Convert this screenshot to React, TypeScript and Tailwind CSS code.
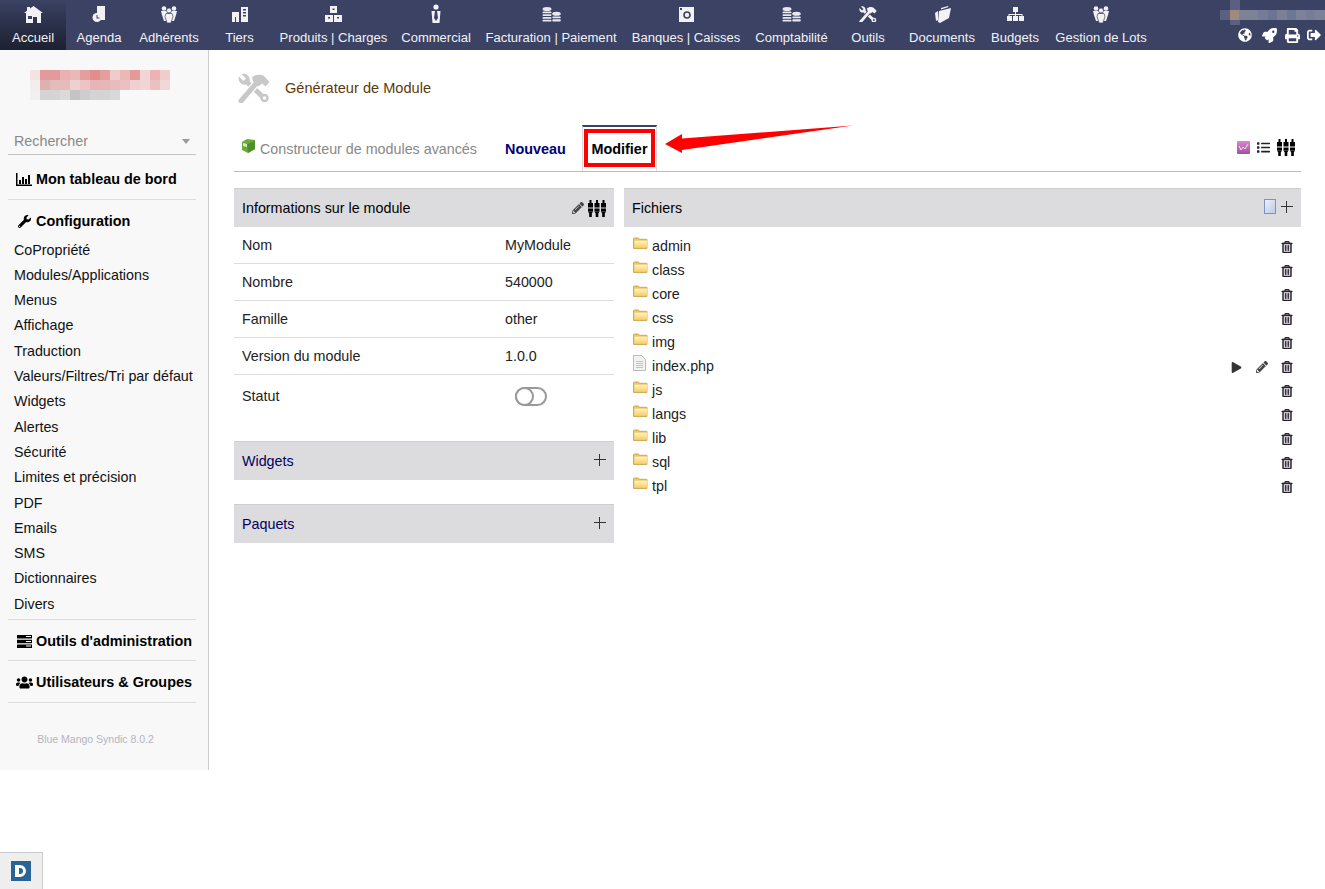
import React from "react";
import { FaGlobeAmericas, FaRocket, FaPrint, FaSignOutAlt, FaWrench, FaUsers, FaPencilAlt, FaPlay, FaRegTrashAlt, FaList } from "react-icons/fa";

const Tools = ({ size, color, bg }: { size: number; color: string; bg: string }) => (
  <svg width={size} height={(size * 30) / 32} viewBox="0 0 32 30">
    <path d="M10 10 L26 25" stroke={color} strokeWidth="5" />
    <circle cx="26.500" cy="25" r="3" fill={bg} stroke={color} strokeWidth="2.500" />
    <path d="M1 3.500 L5.500 8 L8 5.500 L3.500 1 C8 -.5 13 3 11.500 9 L9 11.500 C3 13 -.5 8 1 3.500 Z" fill={color} />
    <path d="M3 28 L19 9.500" stroke={bg} strokeWidth="7.500" />
    <path d="M3 28 L19 9.500" stroke={color} strokeWidth="5" strokeLinecap="round" />
    <path d="M14 4.500 C17 1 23 1 26 3 L31.500 9 L27.500 13.500 L24 10.500 L20.500 13.500 L15 8.500 Z" fill={color} />
  </svg>
);
const Home = () => (
  <svg width="19" height="17" viewBox="0 0 19 17" fill="#f2f2f5">
    <path d="M9.500 0L19 7h-2v10h-4v-6H9v6H2V7H0l3-2.200V1h3v1.600z" />
    <path d="M4 10h4v3H4z" fill="#3b4263" />
  </svg>
);
const SiteMap = () => (
  <svg width="17" height="14" viewBox="0 0 17 14" fill="#f2f2f5">
    <path d="M6 0h5v5H6zM0 9h5v5H0zM6 9h5v5H6zM12 9h5v5h-5z" /><path d="M8 5h1v2h6.500v2h-1V8H9v1H8V8H2.500v1h-1V7H8z" />
  </svg>
);
const Coins = () => (
  <svg width="19" height="15" viewBox="0 0 19 15" fill="#e8e8ee">
    <ellipse cx="5" cy="2" rx="4.500" ry="2" /><rect x=".5" y="4.500" width="9" height="1.800" rx=".9" /><rect x=".5" y="7.200" width="9" height="1.800" rx=".9" /><rect x=".5" y="10" width="9" height="1.800" rx=".9" /><rect x=".5" y="12.800" width="9" height="1.800" rx=".9" />
    <ellipse cx="14.500" cy="6.800" rx="4.300" ry="2" /><rect x="10.300" y="9.400" width="8.500" height="1.800" rx=".9" /><rect x="10.300" y="12.300" width="8.500" height="2.300" rx="1" />
  </svg>
);
const Agenda = () => (
  <svg width="14" height="18" viewBox="0 0 14 18" fill="#f2f2f5">
    <path d="M5 1h8v14H9a5 5 0 0 0-4-6z" /><circle cx="5" cy="12.500" r="4.500" /><path d="M4.500 10h1v2.500h2v1h-3z" fill="#3b4263" />
  </svg>
);
const People = () => (
  <svg width="18" height="17" viewBox="0 0 18 17" fill="#f2f2f5">
    <circle cx="4" cy="2.500" r="2.300" /><path d="M1 5h6l1 3-2 7H4L2 9z" /><circle cx="14" cy="2.500" r="2.300" /><path d="M11 5h6l-1 4-2 6h-2l-2-7z" /><circle cx="9" cy="4.500" r="2.500" stroke="#3b4263" strokeWidth=".7" /><path d="M6 7.500h6l1 3-2 6.500H7l-2-6.500z" stroke="#3b4263" strokeWidth=".7" />
  </svg>
);
const Building = () => (
  <svg width="16" height="16" viewBox="0 0 16 16" fill="#f2f2f5">
    <path d="M9 1h7v15H9zM0 6h7v10H4v-5H3v5H0z" /><path d="M11 3h3v1.500h-3zM11 6h3v1.500h-3zM11 9h3v1.500h-3z" fill="#3b4263" />
  </svg>
);
const Boxes = () => (
  <svg width="17" height="16" viewBox="0 0 17 16" fill="#f2f2f5">
    <path d="M5 0h7v7H5zM0 9h8v7H0zM9 9h8v7H9z" /><path d="M7.500 2.500h2v1.500h-2zM3 11h2v1.500H3zM12 11h2v1.500h-2z" fill="#3b4263" />
  </svg>
);
const Tie = () => (
  <svg width="12" height="20" viewBox="0 0 12 20" fill="#f2f2f5">
    <circle cx="6" cy="3" r="2.600" /><path d="M1.500 7h9l-1 12h-7z" /><path d="M5 7h2l1 7-2 3-2-3z" fill="#3b4263" />
  </svg>
);
const Safe = () => (
  <svg width="15" height="15" viewBox="0 0 15 15">
    <rect width="15" height="15" fill="#f2f2f5" /><circle cx="8" cy="8" r="3" fill="none" stroke="#3b4263" strokeWidth="1.600" /><rect x="1" y="1" width="2" height="2" fill="#3b4263" />
  </svg>
);
const Docs = () => (
  <svg width="17" height="17" viewBox="0 0 17 17" fill="#f2f2f5">
    <path d="M5 5l12-3-2 10-9 5-2-1zM1 7l3-2v9l-2 1z" /><path d="M7 2l7-2 .5 1L7 3.500z" />
  </svg>
);
const Sliders = () => (
  <svg width="18" height="17" viewBox="0 0 18 17" fill="#000">
    {[0, 6.5, 13].map((x) => (
      <g key={x}>
        <rect x={x + 1.500} y="0" width="2" height="4" />
        <rect x={x} y="3" width="5" height="4.500" />
        <rect x={x} y="8.500" width="5" height="3" />
        <path d={`M${x} 11.500h5l-1.200 2v3.500h-2.600v-3.500z`} />
      </g>
    ))}
  </svg>
);
const Plus = () => (
  <svg width="12" height="12" viewBox="0 0 12 12" stroke="#333" strokeWidth="1" className="block"><path d="M5.500 0v12M0 5.500h12" /></svg>
);
const Folder = () => (
  <svg width="15" height="12" viewBox="0 0 16 13">
    <defs><linearGradient id="fo" x1="0" y1="0" x2="0" y2="1"><stop offset="0" stopColor="#fff3c8" /><stop offset="1" stopColor="#f8cf62" /></linearGradient></defs>
    <path d="M.5 2a1 1 0 0 1 1-1h4l1 1.500h8.500v10H.5z" fill="#f0c860" stroke="#c8a656" />
    <rect x="1.500" y="4" width="13.500" height="7.500" fill="url(#fo)" />
  </svg>
);
const FileIco = () => (
  <svg width="13" height="16" viewBox="0 0 13 16">
    <path d="M.500.500h8l4 4v11h-12z" fill="#f2f2f2" stroke="#bbb" />
    <path d="M3 6.500h7M3 8.500h7M3 10.500h7M3 12.500h7" stroke="#c4c4c4" />
  </svg>
);
const Cube = () => (
  <svg width="15" height="15" viewBox="0 0 15 15">
    <path d="M1 3l5-3 8 1v9l-7 4-6-3z" fill="#6aaa3a" /><path d="M6 5l8-3v8l-7 4z" fill="#4f8f2a" /><path d="M2 4l4 1v3l-4-1z" fill="#d8ecc0" />
  </svg>
);
const Stats = () => (
  <svg width="13" height="13" viewBox="0 0 13 13">
    <defs><linearGradient id="st" x1="0" y1="0" x2="0" y2="1"><stop offset="0" stopColor="#d987cf" /><stop offset="1" stopColor="#a64fa0" /></linearGradient></defs>
    <rect width="13" height="13" rx="1" fill="url(#st)" /><path d="M2 5l2 4 2-3 2 2 3-5" fill="none" stroke="#f6e0f4" strokeWidth="1" />
  </svg>
);
const NewFile = () => (
  <svg width="12" height="15" viewBox="0 0 12 15">
    <defs><linearGradient id="nf" x1="0" y1="0" x2="1" y2="1"><stop offset="0" stopColor="#f0f3fa" /><stop offset="1" stopColor="#b9c8e6" /></linearGradient></defs>
    <rect x=".5" y=".5" width="11" height="14" fill="url(#nf)" stroke="#7a94c6" />
  </svg>
);
const Logo = () => (
  <svg width="20" height="20" viewBox="0 0 20 20"><rect width="20" height="20" fill="#2a6496" /><path d="M4 4h5a6 6 0 0 1 6 6 6 6 0 0 1-6 6H8v-3h1a3 3 0 0 0 0-6H8v9H4z" fill="#fff" /></svg>
);
const ChartBar = () => (
  <svg width="16" height="13" viewBox="0 0 16 13" fill="#000">
    <path d="M0 0h1.500v11.500H16V13H0z" /><path d="M3 7h2v4H3zM6 4h2v7H6zM9 6h2v5H9zM12 2h2v9h-2z" />
  </svg>
);
const Server = () => (
  <svg width="15" height="13" viewBox="0 0 15 13" fill="#000">
    <path d="M0 0h15v3.500H0zM0 4.700h15v3.500H0zM0 9.400h15v3.500H0z" /><path d="M9 1h5v1H9zM9 6h5v1H9zM9 10.500h5v1H9z" fill="#fff" />
  </svg>
);

const nav: [string, React.ReactNode, string][] = [
  ["Accueil", <Home />, "w-[66px]"],
  ["Agenda", <Agenda />, "w-[66px]"],
  ["Adhérents", <People />, "w-[74px]"],
  ["Tiers", <Building />, "w-[67px]"],
  ["Produits | Charges", <Boxes />, "w-[121px]"],
  ["Commercial", <Tie />, "w-[84px]"],
  ["Facturation | Paiement", <Coins />, "w-[146px]"],
  ["Banques | Caisses", <Safe />, "w-[124px]"],
  ["Comptabilité", <Coins />, "w-[87px]"],
  ["Outils", <Tools size={18} color="#f2f2f5" bg="#3b4263" />, "w-[66px]"],
  ["Documents", <Docs />, "w-[82px]"],
  ["Budgets", <SiteMap />, "w-[64px]"],
  ["Gestion de Lots", <People />, "w-[108px]"],
];

const sideItems = ["CoPropriété", "Modules/Applications", "Menus", "Affichage", "Traduction", "Valeurs/Filtres/Tri par défaut", "Widgets", "Alertes", "Sécurité", "Limites et précision", "PDF", "Emails", "SMS", "Dictionnaires", "Divers"];
const files = ["admin", "class", "core", "css", "img", "index.php", "js", "langs", "lib", "sql", "tpl"];
const info: [string, string][] = [["Nom", "MyModule"], ["Nombre", "540000"], ["Famille", "other"], ["Version du module", "1.0.0"]];

const logoRows = [
  ["bg-[#f3e4e4]", "bg-[#e39a9a]", "bg-[#e39a9a]", "bg-[#e9b1b1]", "bg-[#ebb8b8]", "bg-[#e59e9e]", "bg-[#e08f8f]", "bg-[#e59e9e]", "bg-[#efcccc]", "bg-[#ebb8b8]", "bg-[#e59a9a]", "bg-[#f1d4d4]", "bg-[#ebb3b3]", "bg-[#f0cccc]"],
  ["bg-[#f3eeee]", "bg-[#dfb0b0]", "bg-[#e4bcbc]", "bg-[#e4bcbc]", "bg-[#efd0d0]", "bg-[#ecc4c4]", "bg-[#e6b6b6]", "bg-[#e4b8b8]", "bg-[#e8bcbc]", "bg-[#ebc0c0]", "bg-[#f0d0d0]", "bg-[#f1d4d4]", "bg-[#ebc0c0]", "bg-[#f1d8d8]"],
  ["bg-[#f0f0f0]", "bg-[#d4d4d4]", "bg-[#d4d4d4]", "bg-[#dadada]", "bg-[#c4c4c4]", "bg-[#cdcdcd]", "bg-[#d4d4d4]", "bg-[#d4d4d4]", "bg-[#d8d8d8]"],
];
const userRow = ["bg-[#5a6180]", "bg-[#a08a80]", "bg-[#7d8299]", "bg-[#7d8299]", "bg-[#757c97]", "bg-[#6c7493]", "bg-[#7d7f95]", "bg-[#6c7695]", "bg-[#7d8299]", "bg-[#767d99]", "bg-[#7d8299]"];

function PanelHead({ title, navy, right }: { title: string; navy?: boolean; right?: React.ReactNode }) {
  return (
    <div className={`h-[39px] bg-[#dcdcdf] border-t border-[#cfcfd2] flex items-center justify-between pl-2 pr-2 ${navy ? "text-[#000060]" : "text-black"}`}>
      <span className="pt-[2px]">{title}</span>
      {right}
    </div>
  );
}

function SideHead({ icon, label, low }: { icon: React.ReactNode; label: string; low?: boolean }) {
  return (
    <div className="flex items-center h-[20px] pl-[14px] font-bold text-[14.4px] text-black">
      <span className="w-[20px] flex justify-center shrink-0">{icon}</span>
      <span className={`ml-[2px] whitespace-nowrap ${low ? "pt-[2px]" : ""}`}>{label}</span>
    </div>
  );
}

export default function App() {
  return (
    <div className="relative h-[889px] w-[1325px] overflow-hidden bg-white text-[14.3px] text-[#222]" style={{ fontFamily: '"Liberation Sans", Arial, sans-serif' }}>
      <header className="h-[50px] bg-[#3b4263] flex text-[13.05px] text-[#f2f2f5]">
        {nav.map(([label, icon, w], i) => (
          <div key={label} className={`${w} shrink-0 h-[50px] flex flex-col items-center ${i === 0 ? "bg-gradient-to-b from-[#3b4263] to-[#1c2030]" : ""}`}>
            <div className="h-[30px] flex items-center justify-center pb-[2px]">{icon}</div>
            <div className="whitespace-nowrap leading-[15px]">{label}</div>
          </div>
        ))}
        <div className="ml-auto w-[105px] shrink-0 flex flex-col">
          <div className="h-[25px] flex flex-col justify-start">
            <div className="h-[10px] flex pl-[10px]"><div className="w-[10px] bg-[#5a6180]" /></div>
            <div className="h-[10px] flex">
              {userRow.map((c, i) => <div key={i} className={`w-[9.5px] ${c}`} />)}
            </div>
            <div className="h-[5px] flex pl-[10px]"><div className="w-[10px] bg-[#5a6180]" /></div>
          </div>
          <div className="flex items-center h-[20px] pl-[18px] text-white">
            <FaGlobeAmericas size={14} />
            <FaRocket size={15} className="ml-[10px]" />
            <FaPrint size={15} className="ml-[8px]" />
            <FaSignOutAlt size={14} className="ml-[7px]" />
          </div>
        </div>
      </header>

      <div className="flex items-start">
        <aside className="w-[209px] h-[720px] shrink-0 bg-[#f8f8f8] border-r border-[#cccccc]">
          <div className="pt-[20px] pl-[30px] h-[60px]">
            {logoRows.map((r, i) => (
              <div key={i} className="flex h-[10px]">
                {r.map((c, j) => <div key={j} className={`w-[10px] ${c}`} />)}
              </div>
            ))}
          </div>
          <div className="ml-[8px] mr-[12px] mt-[19px] h-[26px] border-b border-[#c4c4c4] flex items-center justify-between px-[6px] text-[#888888]">
            <span>Rechercher</span>
            <span className="w-0 h-0 border-x-[4.5px] border-x-transparent border-t-[5px] border-t-[#999999]" />
          </div>
          <div className="mt-[14px]"><SideHead low icon={<ChartBar />} label="Mon tableau de bord" /></div>
          <div className="ml-[8px] mr-[12px] mt-[10px] border-t border-[#dddddd]" />
          <div className="mt-[11px]"><SideHead low icon={<FaWrench size={13} color="#000" />} label="Configuration" /></div>
          <div className="mt-[6.6px]">
            {sideItems.map((s) => (
              <div key={s} className="h-[25.3px] pl-[14px] leading-[25.3px] text-[#111] whitespace-nowrap">{s}</div>
            ))}
          </div>
          <div className="ml-[8px] mr-[12px] mt-[2.4px] border-t border-[#dddddd]" />
          <div className="mt-[11px]"><SideHead icon={<Server />} label="Outils d'administration" /></div>
          <div className="ml-[8px] mr-[12px] mt-[9px] border-t border-[#dddddd]" />
          <div className="mt-[11px]"><SideHead icon={<FaUsers size={17} color="#000" />} label="Utilisateurs & Groupes" /></div>
          <div className="ml-[8px] mr-[12px] mt-[10px] border-t border-[#dddddd]" />
          <div className="mt-[29px] pr-[17px] text-center text-[10.5px] text-[#b4b4bc] leading-[14px]">Blue Mango Syndic 8.0.2</div>
        </aside>

        <main className="w-[1067px] ml-[25px] shrink-0">
          <div className="h-[75px] flex items-center pl-[4px]">
            <Tools size={32} color="#c8c8c8" bg="#ffffff" />
            <span className="ml-[15px] text-[14.6px] text-[#5c3a0b] pt-[3px]">Générateur de Module</span>
          </div>
          <div className="h-[47px] border-b border-[#bbbbbb] flex items-stretch">
            <div className="w-[255px] flex items-center pl-[7px]">
              <span className="mb-[4px]"><Cube /></span>
              <span className="ml-[4px] pt-[3px] whitespace-nowrap text-[#888888]">Constructeur de modules avancés</span>
            </div>
            <div className="w-[93px] pt-[3px] flex items-center justify-center font-bold text-[14.4px] text-[#000078]">Nouveau</div>
            <div className="w-[75px] border-t-2 border-t-[#3b4263] border-x border-x-[#dddddd] pt-[2px] pb-[4px] px-[1px]">
              <div className="h-full pt-[3px] border-4 border-[#ff0000] flex items-center justify-center font-bold text-[14.4px] text-black">Modifier</div>
            </div>
            <div className="ml-auto flex items-center gap-[7px] pr-[6px] pb-[1px]">
              <Stats />
              <FaList size={13} color="#222" />
              <Sliders />
            </div>
          </div>

          <div className="mt-[16px] flex gap-[10px] items-start">
            <section className="w-[380px] shrink-0">
              <PanelHead title="Informations sur le module" right={
                <span className="flex items-center gap-[4px]"><FaPencilAlt size={12} color="#444" /><Sliders /></span>
              } />
              {info.map(([k, v]) => (
                <div key={k} className="h-[37px] flex items-center border-b border-[#dddddd] px-2 pt-[2px]">
                  <span className="w-[263px]">{k}</span><span>{v}</span>
                </div>
              ))}
              <div className="h-[42px] flex items-center px-2">
                <span className="w-[273px] pt-[2px]">Statut</span>
                <span className="w-[32px] h-[19px] rounded-full border-2 border-[#999999] relative block">
                  <span className="absolute -left-[2px] -top-[2px] w-[19px] h-[19px] rounded-full border-2 border-[#999999] bg-white" />
                </span>
              </div>
              <div className="mt-[24px]"><PanelHead title="Widgets" navy right={<span className="pb-[3px]"><Plus /></span>} /></div>
              <div className="mt-[24px]"><PanelHead title="Paquets" navy right={<span className="pb-[3px]"><Plus /></span>} /></div>
            </section>

            <section className="flex-1">
              <PanelHead title="Fichiers" right={
                <span className="flex items-center gap-[5px] pb-[3px]"><NewFile /><Plus /></span>
              } />
              <div className="pt-[7px]">
                {files.map((f) => (
                  <div key={f} className="h-[24px] flex items-center pl-[9px] pr-[8px]">
                    <span className="w-[19px] flex pb-[7px]">{f === "index.php" ? <FileIco /> : <Folder />}</span>
                    <span className="pt-[2px]">{f}</span>
                    <span className="ml-auto flex items-center pt-[2px]">
                      {f === "index.php" && (
                        <>
                          <FaPlay size={11} color="#333" />
                          <FaPencilAlt size={12} color="#444" className="ml-[14px] mr-[13px]" />
                        </>
                      )}
                      <FaRegTrashAlt size={12} color="#2a2230" strokeWidth={20} stroke="#2a2230" />
                    </span>
                  </div>
                ))}
              </div>
            </section>
          </div>
        </main>
      </div>

      <svg className="absolute left-[660px] top-[120px]" width="200" height="40" viewBox="0 0 200 40">
        <path d="M5 24 L22 14 L22 18.500 L193 5.500 L22 30 L22 33 Z" fill="#ff0000" />
      </svg>

      <div className="absolute left-0 bottom-0 w-[43px] h-[37px] bg-[#eeeeee] border-t border-r border-[#cccccc] flex items-center justify-center">
        <Logo />
      </div>
    </div>
  );
}
